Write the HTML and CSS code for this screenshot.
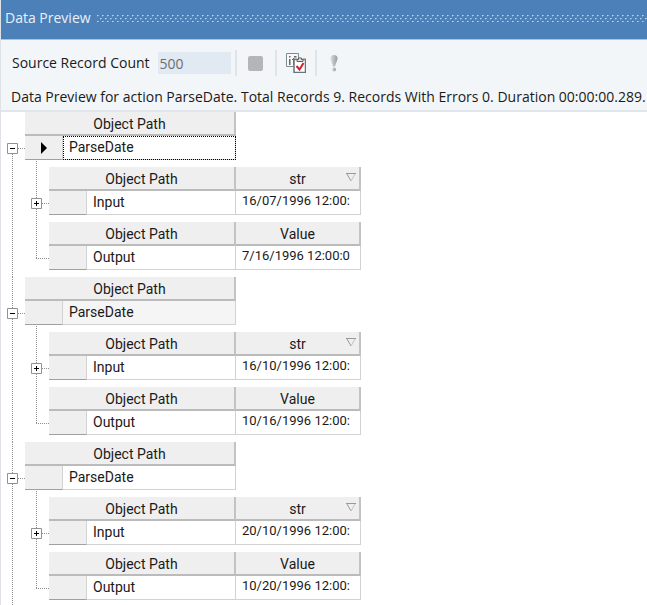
FILE: index.html
```html
<!DOCTYPE html>
<html lang="en">
<head>
<meta charset="utf-8">
<title>Data Preview</title>
<link rel="stylesheet" href="styles.css">
</head>
<body>
<main class="panel">
  <header class="titlebar">
    <h1 class="title">Data Preview</h1>
    <svg class="grip" aria-hidden="true">
      <defs>
        <pattern id="dots" width="5" height="6" patternUnits="userSpaceOnUse">
          <path d="M0 1h2v1H0zM3 4h2v1H3z" fill="#8db4dd"/>
          <path d="M0 1h1v1H0zM3 4h1v1H3z" fill="#bdd6f0"/>
          <path d="M0 2h1v1H0zM3 5h1v1H3z" fill="#6d9ace"/>
        </pattern>
      </defs>
      <rect width="100%" height="8" fill="url(#dots)"/>
    </svg>
  </header>
  <section class="controls">
    <div class="toolbar">
      <label class="count-label" for="count">Source Record Count</label>
      <input class="count" id="count" type="text" value="500">
      <button class="tool" type="button" aria-label="Stop">
        <svg width="15" height="15" viewBox="0 0 15 15"><rect width="15" height="15" rx="2" fill="#b4b5b7"/></svg>
      </button>
      <button class="tool" type="button" aria-label="Evaluate">
        <svg width="20" height="20" viewBox="0 0 20 20">
          <path d="M.5.5h12v13H.5z" fill="#f7f9fa" stroke="#7d8b93"/>
          <path d="M3 6h1.500v6H3zM3 3h1.500v1.500H3zM6 6h4v1H6zM7 5h1.500v7H7zM8 3h2.500v1.500H8z" fill="#5c6b75"/>
          <path d="M8 6.500h11.500v13H8z" fill="#fff" stroke="#66757e" stroke-width="1.500"/>
          <path d="M8 6h3M17 6h3" stroke="#d98a4a"/>
          <path d="M11 8.500v-2h1.500V5h3v1.500H17v2z" fill="#dfe5e8" stroke="#55656e"/>
          <path d="M10.500 13l3 3.500 4-6.500" fill="none" stroke="#d3202a" stroke-width="2"/>
        </svg>
      </button>
      <button class="tool narrow" type="button" aria-label="Errors">
        <svg width="8" height="17" viewBox="0 0 8 17">
          <defs><linearGradient id="shade"><stop offset="0" stop-color="#dcdee0"/><stop offset="1" stop-color="#98999b"/></linearGradient></defs>
          <path d="M4 0C1.500 0 .5 1.500.5 3.500.5 6 2.500 8 3 11.500h2C5.500 8 7.500 6 7.500 3.500 7.500 1.500 6.500 0 4 0z" fill="url(#shade)"/>
          <circle cx="4" cy="14.500" r="2" fill="url(#shade)"/>
        </svg>
      </button>
    </div>
    <p class="status">Data Preview for action ParseDate. Total Records 9. Records With Errors 0. Duration 00:00:00.289.</p>
  </section>
  <ul class="tree">
    <li class="group">
      <div class="node">
        <button class="toggle" type="button" aria-label="Collapse"><svg width="11" height="11"><path d="M.5.5h10v10H.5z" fill="#fff" stroke="#919191"/><path d="M3 5.500h5" stroke="#000"/></svg></button>
        <table class="grid parent">
          <thead><tr><th colspan="2">Object Path</th></tr></thead>
          <tbody><tr><td class="selector"><svg width="7" height="12"><path d="M0 0l6 6-6 6z"/></svg></td><td class="name focused">ParseDate</td></tr></tbody>
        </table>
      </div>
      <ul class="children">
        <li class="node">
          <button class="toggle" type="button" aria-label="Expand"><svg width="11" height="11"><path d="M.5.5h10v10H.5z" fill="#fff" stroke="#919191"/><path d="M3 5.500h5M5.500 3v5" stroke="#000"/></svg></button>
          <table class="grid">
            <thead><tr><th colspan="2">Object Path</th><th class="extra">str<svg class="sort" width="10" height="9"><path d="M0 .5h10M1 1l4 7" stroke="#999" fill="none"/><path d="M9 1L5 8" stroke="#c4c4c4"/></svg></th></tr></thead>
            <tbody><tr><td class="selector"></td><td class="name">Input</td><td class="value">16/07/1996 12:00:</td></tr></tbody>
          </table>
        </li>
        <li class="node">
          <table class="grid">
            <thead><tr><th colspan="2">Object Path</th><th class="extra">Value</th></tr></thead>
            <tbody><tr><td class="selector"></td><td class="name">Output</td><td class="value">7/16/1996 12:00:0</td></tr></tbody>
          </table>
        </li>
      </ul>
    </li>
    <li class="group">
      <div class="node">
        <button class="toggle" type="button" aria-label="Collapse"><svg width="11" height="11"><path d="M.5.5h10v10H.5z" fill="#fff" stroke="#919191"/><path d="M3 5.500h5" stroke="#000"/></svg></button>
        <table class="grid parent alternate">
          <thead><tr><th colspan="2">Object Path</th></tr></thead>
          <tbody><tr><td class="selector"></td><td class="name">ParseDate</td></tr></tbody>
        </table>
      </div>
      <ul class="children">
        <li class="node">
          <button class="toggle" type="button" aria-label="Expand"><svg width="11" height="11"><path d="M.5.5h10v10H.5z" fill="#fff" stroke="#919191"/><path d="M3 5.500h5M5.500 3v5" stroke="#000"/></svg></button>
          <table class="grid">
            <thead><tr><th colspan="2">Object Path</th><th class="extra">str<svg class="sort" width="10" height="9"><path d="M0 .5h10M1 1l4 7" stroke="#999" fill="none"/><path d="M9 1L5 8" stroke="#c4c4c4"/></svg></th></tr></thead>
            <tbody><tr><td class="selector"></td><td class="name">Input</td><td class="value">16/10/1996 12:00:</td></tr></tbody>
          </table>
        </li>
        <li class="node">
          <table class="grid">
            <thead><tr><th colspan="2">Object Path</th><th class="extra">Value</th></tr></thead>
            <tbody><tr><td class="selector"></td><td class="name">Output</td><td class="value">10/16/1996 12:00:</td></tr></tbody>
          </table>
        </li>
      </ul>
    </li>
    <li class="group">
      <div class="node">
        <button class="toggle" type="button" aria-label="Collapse"><svg width="11" height="11"><path d="M.5.5h10v10H.5z" fill="#fff" stroke="#919191"/><path d="M3 5.500h5" stroke="#000"/></svg></button>
        <table class="grid parent">
          <thead><tr><th colspan="2">Object Path</th></tr></thead>
          <tbody><tr><td class="selector"></td><td class="name">ParseDate</td></tr></tbody>
        </table>
      </div>
      <ul class="children">
        <li class="node">
          <button class="toggle" type="button" aria-label="Expand"><svg width="11" height="11"><path d="M.5.5h10v10H.5z" fill="#fff" stroke="#919191"/><path d="M3 5.500h5M5.500 3v5" stroke="#000"/></svg></button>
          <table class="grid">
            <thead><tr><th colspan="2">Object Path</th><th class="extra">str<svg class="sort" width="10" height="9"><path d="M0 .5h10M1 1l4 7" stroke="#999" fill="none"/><path d="M9 1L5 8" stroke="#c4c4c4"/></svg></th></tr></thead>
            <tbody><tr><td class="selector"></td><td class="name">Input</td><td class="value">20/10/1996 12:00:</td></tr></tbody>
          </table>
        </li>
        <li class="node">
          <table class="grid">
            <thead><tr><th colspan="2">Object Path</th><th class="extra">Value</th></tr></thead>
            <tbody><tr><td class="selector"></td><td class="name">Output</td><td class="value">10/20/1996 12:00:</td></tr></tbody>
          </table>
        </li>
      </ul>
    </li>
  </ul>
</main>
</body>
</html>
```

FILE: styles.css
```css
* {
  box-sizing: border-box;
}

body {
  margin: 0;
  background: #fff;
  color: #1a1a1a;
  font: 14px/20px "Open Sans", "Noto Sans", sans-serif;
}

ul {
  margin: 0;
  padding: 0;
  list-style: none;
}

button {
  padding: 0;
  border: 0;
  background: none;
}

svg {
  display: block;
}

.panel {
  min-height: 100vh;
  border-left: 1px solid #dfe3e8;
}

.titlebar {
  display: flex;
  align-items: center;
  gap: 6px;
  height: 40px;
  padding: 0 0 3px 4px;
  border-bottom: 1px solid #a9c3e0;
  background: #4b80b8;
}

.title {
  margin: 0;
  color: #e8f1fb;
  font-size: 14px;
  font-weight: 400;
}

.grip {
  flex: 1;
  min-width: 0;
  height: 8px;
}

.controls {
  padding: 10px 0 3px 10px;
  border-bottom: 2px solid #e1e6ec;
  background: #f3f6f9;
}

.toolbar {
  display: flex;
  align-items: center;
  height: 26px;
}

.count-label {
  padding-left: 1px;
}

.count {
  width: 73px;
  height: 22px;
  margin: 0 4px 0 8px;
  padding: 0 2px;
  border: 0;
  background: #e1e9f2;
  color: #6d6d6d;
  font: inherit;
}

.tool {
  display: flex;
  align-items: center;
  justify-content: center;
  width: 40px;
  height: 26px;
  border-left: 2px solid #e0e4e9;
}

.narrow {
  width: 36px;
}

.status {
  margin: 11px 0 0;
  white-space: nowrap;
}

.tree {
  overflow: hidden;
  padding-left: 6px;
  font: 14px/18px Roboto, "Liberation Sans", sans-serif;
}

.group {
  position: relative;
}

.group::before,
.children::before {
  content: "";
  position: absolute;
  width: 1px;
  background: repeating-linear-gradient(#8f8f8f 0 1px, transparent 1px 2px);
}

.group::before {
  top: 0;
  bottom: 0;
  left: 5px;
}

.group:first-child::before {
  top: 36px;
}

.children {
  position: relative;
  margin-left: 24px;
}

.children::before {
  top: -6px;
  bottom: 19px;
  left: 5px;
}

.node {
  position: relative;
  display: flex;
  align-items: flex-start;
  height: 55px;
  padding-left: 18px;
}

.node::before {
  content: "";
  position: absolute;
  top: 36px;
  left: 5px;
  width: 13px;
  height: 1px;
  background: repeating-linear-gradient(90deg, #8f8f8f 0 1px, transparent 1px 2px);
}

.toggle {
  position: absolute;
  top: 31px;
  left: 0;
}

.grid {
  width: 312px;
  border-collapse: separate;
  border-spacing: 0;
}

.parent {
  width: 211px;
}

th,
td {
  height: 24px;
  padding: 0 6px;
  white-space: nowrap;
}

th {
  position: relative;
  padding-top: 2px;
  border-right: 2px solid #c3c3c3;
  border-bottom: 2px solid #bbb;
  background: #efefef;
  font-weight: 400;
}

td {
  border-right: 1px solid #d2d2d2;
  border-bottom: 1px solid #d2d2d2;
  vertical-align: top;
}

.extra {
  width: 125px;
}

.name {
  padding-top: 2px;
}

.value {
  padding-top: 1px;
  font-size: 13px;
}

.selector {
  width: 38px;
  padding: 0 0 0 16px;
  border-bottom-color: #a0a0a0;
  background: #efefef;
  vertical-align: middle;
}

.alternate .name {
  background: #f5f5f5;
}

.focused {
  outline: 1px dotted #000;
  outline-offset: -1px;
}

.sort {
  position: absolute;
  top: 6px;
  right: 3px;
}
```
